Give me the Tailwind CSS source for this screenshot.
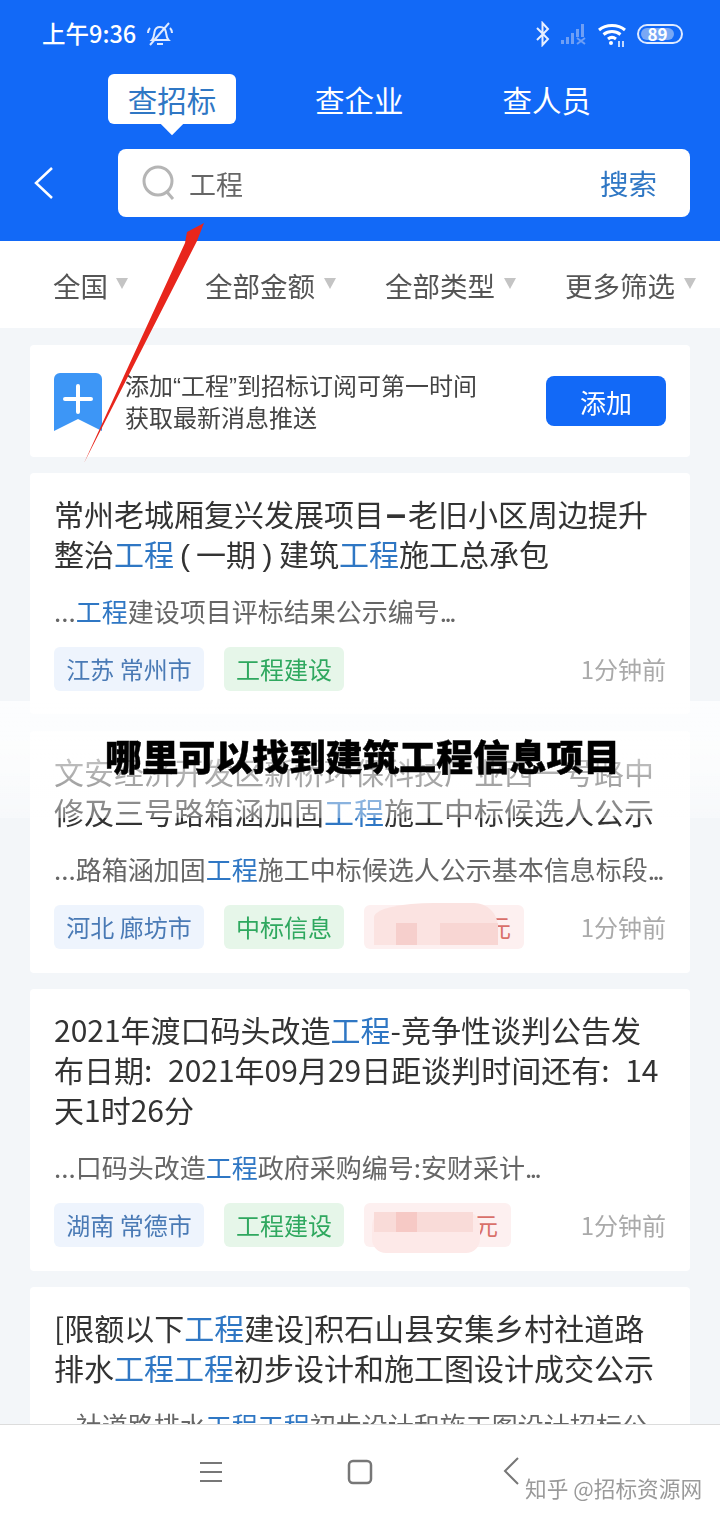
<!DOCTYPE html>
<html lang="zh">
<head>
<meta charset="utf-8">
<script src="https://cdn.jsdelivr.net/npm/@tailwindcss/browser@4"></script>
<title>查招标</title>
</head>
<body class="m-0">
<div class="relative w-[720px] h-[1520px] overflow-hidden flex flex-col bg-[#f3f6f9] text-[#333] font-['Noto_Sans_CJK_SC','Noto_Sans',sans-serif]">
  <div class="flex flex-col flex-1 min-h-0 blur-[0.5px]">
  <!-- header -->
  <header class="h-[241px] shrink-0 bg-[#1269f7] text-white flex flex-col">
    <div class="h-[68px] pl-[42px] pr-[37px] flex items-center">
      <span class="text-[23.500px] leading-none font-medium">上午9:36</span>
      <svg class="ml-[10px]" width="28" height="28" viewBox="0 0 28 28" fill="none" stroke="#dfeaff" stroke-width="2"><path d="M6 20c2-2 2-5 2.500-8 .6-3.500 3-5 5.500-5 3.500 0 5.500 2.500 6 5.500.5 3 .5 5.500 2.500 7.500z"/><path d="M11 24h6M4 25 23 3M2 13c0-2 .5-3.500 2-5M26 13c0-2-.5-3.500-2-5"/></svg>
      <div class="ml-auto flex items-center">
        <svg width="16" height="26" viewBox="0 0 16 26" fill="none" stroke="#e8f0ff" stroke-width="2"><path d="M2 7l11 11-5.500 6V2L13 8 2 19"/></svg>
        <svg class="ml-[9px]" width="28" height="22" viewBox="0 0 28 22" fill="#6f9ff5"><rect x="1" y="17" width="3" height="4"/><rect x="6" y="14" width="3" height="7"/><rect x="11" y="10" width="3" height="11"/><rect x="16" y="6" width="3" height="8"/><rect x="21" y="1" width="3" height="13"/><path d="M17 15l8 6M25 15l-8 6" stroke="#6f9ff5" stroke-width="2"/></svg>
        <svg class="ml-[9px]" width="30" height="26" viewBox="0 0 30 26" fill="none" stroke="#fff" stroke-width="3"><path d="M2 9c7-6 19-6 26 0M6.500 13.500c5-4 12-4 17 0M11 18c2.500-2 5.500-2 8 0"/><circle cx="14" cy="22" r="2" fill="#fff" stroke="none"/><path d="M22 20v6M26 20v6" stroke-width="1.500"/></svg>
        <div class="ml-[10px] w-[46px] h-[20px] rounded-full border-2 border-[#dfeaff] p-[2px] flex">
          <div class="w-[33px] rounded-full bg-[#79a8f5] text-[17px] leading-[12px] font-bold text-white text-center">89</div>
        </div>
      </div>
    </div>
    <nav class="h-[50px] mt-[6px] flex items-center text-[29.500px]">
      <div class="relative ml-[108px] w-[128px] h-[50px] rounded-[6px] bg-white text-[#2f77c4] flex items-center justify-center"><span class="relative z-10">查招标</span>
        <div class="absolute left-[54px] top-[37px] w-[20px] h-[20px] rotate-45 bg-white"></div>
      </div>
      <span class="ml-[79px]">查企业</span>
      <span class="ml-[99px]">查人员</span>
    </nav>
    <div class="mt-[25px] flex items-center">
      <svg class="ml-[33px]" width="20" height="34" viewBox="0 0 20 34" fill="none" stroke="#fff" stroke-width="2.500"><path d="M19 2 3 17l16 15"/></svg>
      <div class="ml-[65px] w-[572px] h-[68px] rounded-[8px] bg-white flex items-center pl-[24px] pr-[33px]">
        <svg width="34" height="36" viewBox="0 0 34 36" fill="none" stroke="#b5b5b5" stroke-width="3"><circle cx="16" cy="16" r="14"/><path d="M25 27l6 7"/></svg>
        <span class="ml-[13px] mt-[3px] text-[27px] text-[#666]">工程</span>
        <span class="ml-auto text-[28.500px] text-[#2f77c4]">搜索</span>
      </div>
    </div>
  </header>

  <!-- filter -->
  <div class="h-[87px] shrink-0 bg-white flex items-center text-[27.500px] text-[#555]">
    <span class="ml-[53px] mt-[2px]">全国</span>
    <span class="ml-[8px] -mt-[3px] w-0 h-0 border-x-[6px] border-x-transparent border-t-[11px] border-t-[#c4c4c4]"></span>
    <span class="ml-[77px] mt-[2px]">全部金额</span>
    <span class="ml-[9px] -mt-[3px] w-0 h-0 border-x-[6px] border-x-transparent border-t-[11px] border-t-[#c4c4c4]"></span>
    <span class="ml-[49px] mt-[2px]">全部类型</span>
    <span class="ml-[9px] -mt-[3px] w-0 h-0 border-x-[6px] border-x-transparent border-t-[11px] border-t-[#c4c4c4]"></span>
    <span class="ml-[49px] mt-[2px]">更多筛选</span>
    <span class="ml-[9px] -mt-[3px] w-0 h-0 border-x-[6px] border-x-transparent border-t-[11px] border-t-[#c4c4c4]"></span>
  </div>

  <!-- list -->
  <main class="flex-1 min-h-0 overflow-hidden px-[30px] pt-[17px] flex flex-col gap-[16px]">
    <section class="h-[112px] shrink-0 rounded-[4px] bg-white flex items-center pl-[24px] pr-[24px]">
      <svg width="48" height="58" viewBox="0 0 48 58" class="mt-[2px]"><path d="M0 6a6 6 0 0 1 6-6h36a6 6 0 0 1 6 6v52L24 46 0 58z" fill="#3d96f6"/><path d="M24 13v26M11 26h26" stroke="#fff" stroke-width="4" stroke-linecap="round"/></svg>
      <p class="ml-[23px] text-[24px] leading-[32px] text-[#444]">添加<span class="font-['Liberation_Sans'] leading-none">“</span>工程<span class="font-['Liberation_Sans'] leading-none">”</span>到招标订阅可第一时间<br>获取最新消息推送</p>
      <div class="ml-auto w-[120px] h-[50px] rounded-[8px] bg-[#1269f7] text-white text-[26px] flex items-center justify-center">添加</div>
    </section>

    <article class="shrink-0 rounded-[4px] bg-white px-[24px] pt-[20px] pb-[23px]">
      <h2 class="text-[30px] leading-[40px] font-normal">常州老城厢复兴发展项目<span class="inline-block w-[24px] leading-none text-[36px] font-bold text-center font-['Liberation_Sans']">–</span>老旧小区周边提升<br>整治<span class="text-[#2f77c4]">工程</span><span class="inline-block w-[22px] leading-none text-center font-['Liberation_Sans']">(</span>一期<span class="inline-block w-[23px] leading-none text-center font-['Liberation_Sans']">)</span>建筑<span class="text-[#2f77c4]">工程</span>施工总承包</h2>
      <p class="mt-[20px] text-[26px] leading-[36px] text-[#666] whitespace-nowrap overflow-hidden">...<span class="text-[#2f77c4]">工程</span>建设项目评标结果公示编号<span class="tracking-[-2.500px]">...</span></p>
      <div class="mt-[18px] flex items-center gap-[20px] h-[44px] text-[24px]">
        <span class="w-[150px] h-[44px] rounded-[6px] bg-[#eef4fd] text-[#4a7ab5] flex items-center justify-center">江苏 常州市</span>
        <span class="w-[120px] h-[44px] rounded-[6px] bg-[#e6f6e9] text-[#2fa85f] flex items-center justify-center">工程建设</span>
        <span class="ml-auto text-[#aaa]">1分钟前</span>
      </div>
    </article>

    <article class="shrink-0 mt-[1px] rounded-[4px] bg-white px-[24px] pt-[20px] pb-[24px]">
      <h2 class="text-[30px] leading-[40px] font-normal">文安经济开发区新桥环保科技厂业西一号路中<br>修及三号路箱涵加固<span class="text-[#2f77c4]">工程</span>施工中标候选人公示</h2>
      <p class="mt-[20px] text-[26px] leading-[36px] text-[#666] whitespace-nowrap">...路箱涵加固<span class="text-[#2f77c4]">工程</span>施工中标候选人公示基本信息标段<span class="tracking-[-2.500px]">...</span></p>
      <div class="mt-[18px] flex items-center gap-[20px] h-[44px] text-[24px]">
        <span class="w-[150px] h-[44px] rounded-[6px] bg-[#eef4fd] text-[#4a7ab5] flex items-center justify-center">河北 廊坊市</span>
        <span class="w-[120px] h-[44px] rounded-[6px] bg-[#e6f6e9] text-[#2fa85f] flex items-center justify-center">中标信息</span>
        <span class="relative w-[160px] h-[44px] rounded-[6px] bg-[#fdf0f0] text-[#d9706a] flex items-center justify-end pr-[13px]">元
          <span class="absolute left-[10px] top-[-2px] w-[124px] h-[42px] rounded-tl-[60px_14px] rounded-tr-[24px] bg-[#fbe3e1]"></span>
          <span class="absolute left-[32px] top-[18px] w-[21px] h-[22px] bg-[#f6cfcc]"></span>
          <span class="absolute left-[76px] top-[18px] w-[58px] h-[22px] bg-[#f8d6d3]"></span>
        </span>
        <span class="ml-auto text-[#aaa]">1分钟前</span>
      </div>
    </article>

    <article class="shrink-0 rounded-[4px] bg-white px-[24px] pt-[20px] pb-[24px]">
      <h2 class="text-[30px] leading-[40px] font-normal">2021年渡口码头改造<span class="text-[#2f77c4]">工程</span>-竞争性谈判公告发<br>布日期<span class="inline-block w-[24px]">:</span>2021年09月29日距谈判时间还有<span class="inline-block w-[24px]">:</span>14<br>天1时26分</h2>
      <p class="mt-[20px] text-[26px] leading-[36px] text-[#666] whitespace-nowrap">...口码头改造<span class="text-[#2f77c4]">工程</span>政府采购编号:安财采计<span class="tracking-[-2.500px]">...</span></p>
      <div class="mt-[18px] flex items-center gap-[20px] h-[44px] text-[24px]">
        <span class="w-[150px] h-[44px] rounded-[6px] bg-[#eef4fd] text-[#4a7ab5] flex items-center justify-center">湖南 常德市</span>
        <span class="w-[120px] h-[44px] rounded-[6px] bg-[#e6f6e9] text-[#2fa85f] flex items-center justify-center">工程建设</span>
        <span class="relative w-[147px] h-[44px] rounded-[6px] bg-[#fdf0f0] text-[#d9706a] flex items-center justify-end pr-[13px]">元
          <span class="absolute left-[8px] top-[9px] w-[108px] h-[41px] rounded-[14px] bg-[#fde9e8]"></span>
          <span class="absolute left-[10px] top-[9px] w-[99px] h-[20px] bg-[#f9dbd8]"></span>
          <span class="absolute left-[32px] top-[9px] w-[21px] h-[20px] bg-[#f6c9c5]"></span>
        </span>
        <span class="ml-auto text-[#aaa]">1分钟前</span>
      </div>
    </article>

    <article class="shrink-0 rounded-[4px] bg-white px-[24px] pt-[20px] pb-[24px]">
      <h2 class="text-[30px] leading-[40px] font-normal">[限额以下<span class="text-[#2f77c4]">工程</span>建设]积石山县安集乡村社道路<br>排水<span class="text-[#2f77c4]">工程工程</span>初步设计和施工图设计成交公示</h2>
      <p class="mt-[20px] text-[26px] leading-[36px] text-[#666] whitespace-nowrap">...社道路排水<span class="text-[#2f77c4]">工程工程</span>初步设计和施工图设计招标公...</p>
    </article>
  </main>

  <!-- nav bar -->
  <footer class="h-[96px] shrink-0 bg-white border-t border-[#dcdcdc] flex items-start">
    <svg class="ml-[199px] mt-[35px]" width="24" height="24" viewBox="0 0 24 24" fill="none" stroke="#777" stroke-width="2"><path d="M1 3h22M1 12h22M1 21h22"/></svg>
    <svg class="ml-[124px] mt-[34px]" width="26" height="26" viewBox="0 0 26 26" fill="none" stroke="#777" stroke-width="2.500"><rect x="2" y="2" width="22" height="22" rx="4"/></svg>
    <svg class="ml-[129px] mt-[31px]" width="20" height="30" viewBox="0 0 20 30" fill="none" stroke="#777" stroke-width="2"><path d="M16 2 3 15l13 13"/></svg>
  </footer>
  </div>

  <!-- overlays -->
  <div class="absolute left-0 top-[701px] w-[720px] h-[117px] bg-linear-to-b from-white/75 via-white/70 to-white/35"></div>
  <svg class="absolute left-0 top-0" width="720" height="480" viewBox="0 0 720 480"><path d="M84 463 185 243 187 232 204 223 197 241z" fill="#e8261c"/></svg>
  <div class="absolute left-[105px] top-[730px] text-[36.800px] leading-[50px] font-black text-black whitespace-nowrap [-webkit-text-stroke:0.5px_black]">哪里可以找到建筑工程信息项目</div>
  <div class="absolute left-[525px] top-[1472px] text-[21.700px] leading-[32px] text-[#9a9a9a] [text-shadow:0_0_2px_#fff] whitespace-nowrap">知乎 @招标资源网</div>
</div>
</body>
</html>
